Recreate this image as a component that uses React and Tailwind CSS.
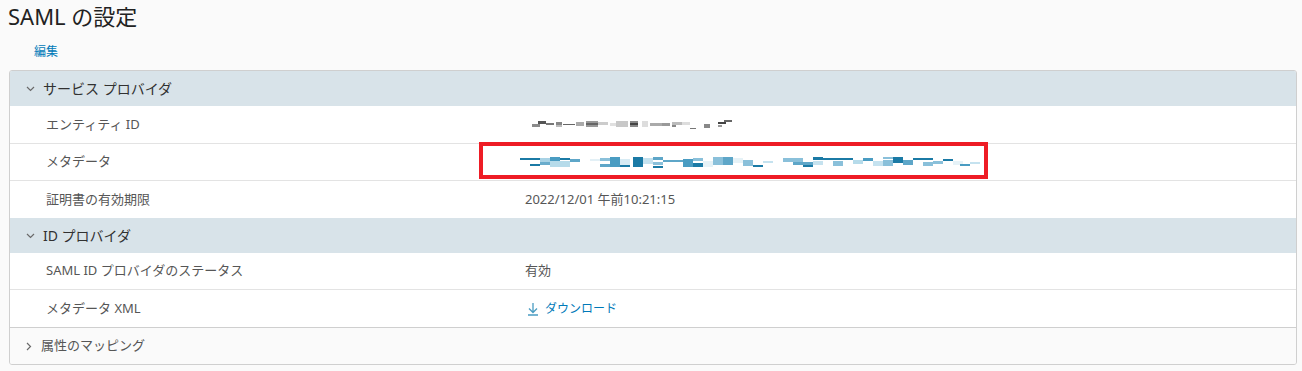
import React from "react";

const FONT = { fontFamily: '"Noto Sans", "Noto Sans CJK JP", sans-serif' };

function ChevronDown() {
  return (
    <svg width="9" height="6" viewBox="0 0 9 6" className="shrink-0">
      <path d="M1 1 L4.5 4.5 L8 1" fill="none" stroke="#6a6a6a" strokeWidth="1.2" />
    </svg>
  );
}
function ChevronRight() {
  return (
    <svg width="6" height="9" viewBox="0 0 6 9" className="shrink-0">
      <path d="M1 1 L4.5 4.5 L1 8" fill="none" stroke="#6a6a6a" strokeWidth="1.2" />
    </svg>
  );
}

function Pixelated({ blocks, width, height }) {
  return (
    <svg width={width} height={height} viewBox={`0 0 ${width} ${height}`}>
      {blocks.map((b, i) => (
        <rect key={i} x={b[0]} y={b[1]} width={b[2]} height={b[3]} fill={b[4]} />
      ))}
    </svg>
  );
}

const grayBlocks = [
  [0, 5, 8, 3, "#8a8a8a"], [6, 2, 8, 3, "#555"], [14, 4, 8, 2, "#777"], [24, 3, 6, 3, "#888"],
  [24, 6, 6, 2, "#bbb"], [31, 5, 12, 1, "#666"], [44, 3, 8, 4, "#aaa"], [54, 2, 12, 6, "#999"],
  [54, 4, 12, 2, "#666"], [66, 3, 10, 3, "#ccc"], [78, 4, 6, 3, "#e0e0e0"], [84, 2, 12, 6, "#c8c8c8"],
  [98, 2, 8, 6, "#888"], [98, 4, 8, 2, "#444"], [110, 2, 6, 6, "#ddd"], [118, 4, 12, 3, "#aaa"],
  [130, 4, 8, 3, "#999"], [140, 3, 10, 3, "#bbb"], [140, 6, 4, 2, "#888"], [150, 3, 8, 3, "#ddd"],
  [158, 9, 6, 1, "#777"], [172, 5, 6, 4, "#888"], [186, 3, 8, 2, "#444"], [186, 6, 4, 2, "#999"],
  [192, 1, 8, 2, "#666"],
];

const blueBlocks = [
  [0, 3, 20, 2, "#1b7aa5"], [20, 3, 10, 4, "#a8d2e5"], [20, 7, 12, 3, "#6aaccc"], [10, 9, 10, 2, "#1b7aa5"],
  [30, 2, 10, 5, "#4a9cc2"], [40, 3, 10, 2, "#1b7aa5"], [30, 6, 20, 6, "#b6dbea"], [50, 4, 10, 3, "#5ea6c8"],
  [70, 4, 10, 2, "#e3f0f6"], [80, 3, 10, 3, "#8ac0da"], [80, 9, 20, 3, "#5ea6c8"], [90, 2, 10, 10, "#4a9cc2"],
  [100, 4, 10, 6, "#d7ebf4"], [100, 10, 10, 2, "#1b7aa5"], [113, 2, 10, 10, "#1b7aa5"], [123, 3, 10, 6, "#c5e2ef"],
  [133, 2, 10, 3, "#5ea6c8"], [133, 7, 10, 3, "#8ac0da"], [133, 11, 10, 2, "#1b7aa5"], [143, 5, 20, 2, "#5ea6c8"],
  [163, 4, 10, 8, "#4a9cc2"], [173, 3, 10, 3, "#8ac0da"], [173, 8, 10, 4, "#1b7aa5"], [183, 6, 10, 6, "#e6f2f7"],
  [193, 2, 10, 8, "#8ac0da"], [203, 2, 10, 8, "#5ea6c8"], [213, 3, 10, 5, "#e6f2f7"], [223, 5, 10, 6, "#8ac0da"],
  [233, 10, 10, 2, "#1b7aa5"], [243, 6, 10, 2, "#c5e2ef"], [263, 3, 20, 4, "#8ac0da"], [273, 7, 20, 3, "#5ea6c8"],
  [283, 10, 10, 2, "#1b7aa5"], [293, 2, 10, 3, "#1b7aa5"], [293, 6, 10, 4, "#c5e2ef"], [303, 3, 20, 2, "#1b7aa5"],
  [313, 6, 10, 5, "#8ac0da"], [323, 3, 10, 2, "#1b7aa5"], [333, 5, 10, 4, "#b6dbea"], [343, 3, 10, 3, "#4a9cc2"],
  [353, 6, 10, 5, "#c5e2ef"], [363, 2, 10, 2, "#8ac0da"], [363, 5, 10, 6, "#8ac0da"], [373, 2, 10, 6, "#1b7aa5"],
  [383, 5, 10, 5, "#5ea6c8"], [393, 3, 20, 2, "#1b7aa5"], [403, 7, 10, 4, "#8ac0da"], [413, 6, 10, 3, "#8ac0da"],
  [423, 4, 10, 2, "#1b7aa5"], [433, 6, 10, 4, "#e6f2f7"], [440, 9, 10, 2, "#4a9cc2"], [450, 7, 10, 2, "#c5e2ef"],
];

function SectionHeader({ children }) {
  return (
    <div className="flex h-[35px] items-center gap-[8px] bg-[#d8e3e9] pl-[16px] text-[14px] text-[#313131]">
      <ChevronDown />
      <span>{children}</span>
    </div>
  );
}

function Row({ label, children, last, tall }) {
  return (
    <div
      className={`flex ${tall ? "h-[38px]" : "h-[37px]"} items-center bg-white text-[13px] text-[#565656] ${
        last ? "" : "border-b border-[#e3e3e3]"
      }`}
    >
      <div className="w-[515px] pl-[36px]">{label}</div>
      <div className="flex items-center">{children}</div>
    </div>
  );
}

export default function App() {
  return (
    <div className="relative min-h-[371px] w-[1302px] bg-[#fafafa]" style={FONT}>
      <div className="pl-[8px] pt-[2px] text-[22px] leading-[28px] text-[#222]">SAML の設定</div>
      <div className="pl-[34px] pt-[14px] text-[12px] leading-[16px] text-[#0079b8]">編集</div>
      <div className="ml-[9px] mt-[10px] w-[1288px] overflow-hidden rounded-[3px] border border-[#cfcfcf]">
        <SectionHeader>サービス プロバイダ</SectionHeader>
        <Row label="エンティティ ID" tall>
          <div className="pl-[7px]">
            <Pixelated blocks={grayBlocks} width={240} height={12} />
          </div>
        </Row>
        <Row label="メタデータ">
          <div className="ml-[-5px]">
            <Pixelated blocks={blueBlocks} width={460} height={14} />
          </div>
        </Row>
        <Row label="証明書の有効期限" last>
          2022/12/01 午前10:21:15
        </Row>
        <SectionHeader>ID プロバイダ</SectionHeader>
        <Row label="SAML ID プロバイダのステータス">有効</Row>
        <Row label="メタデータ XML" last>
          <span className="flex items-center gap-[6px] pl-[2px] text-[12px] text-[#0079b8]">
            <svg width="12" height="14" viewBox="0 0 12 14">
              <path d="M6 1 V10 M2 6.5 L6 10.5 L10 6.5 M1 13 H11" fill="none" stroke="#4a9cc2" strokeWidth="1.3" />
            </svg>
            ダウンロード
          </span>
        </Row>
        <div className="flex h-[37px] items-center gap-[9px] border-t border-[#cfcfcf] bg-[#fafafa] pl-[16px] text-[13px] text-[#565656]">
          <ChevronRight />
          <span>属性のマッピング</span>
        </div>
      </div>
      <div className="pointer-events-none absolute left-[479px] top-[142px] h-[37px] w-[509px] border-[4px] border-[#ee1c25]" />
    </div>
  );
}
